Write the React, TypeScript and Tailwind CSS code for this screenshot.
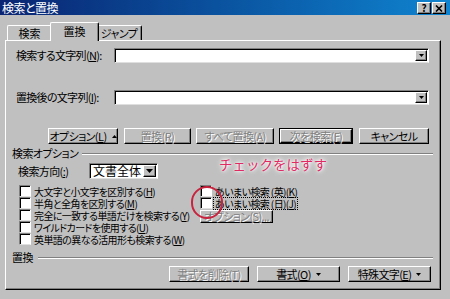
import type { ReactNode } from "react";

const raised =
  "bg-[#c0c0c0] border border-t-white border-l-white border-r-black border-b-black shadow-[inset_-1px_-1px_0_#808080]";
const sunken =
  "border border-t-[#808080] border-l-[#808080] border-r-white border-b-[#dfdfdf] shadow-[inset_1px_1px_0_#000]";
const disabledText = "text-[#808080] [text-shadow:1px_1px_0_#fff]";

function Down({ w = 5, h = 3 }: { w?: number; h?: number }) {
  return (
    <svg width={w} height={h} viewBox={`0 0 ${w} ${h}`} className="shrink-0">
      <path d={`M0 0H${w}L${w / 2} ${h}Z`} fill="currentColor" />
    </svg>
  );
}

function Up() {
  return (
    <svg width="5" height="3" viewBox="0 0 5 3" className="shrink-0">
      <path d="M0 3H5L2.5 0Z" fill="currentColor" />
    </svg>
  );
}

function Btn({
  className,
  children,
  disabled,
  isDefault,
}: {
  className: string;
  children: ReactNode;
  disabled?: boolean;
  isDefault?: boolean;
}) {
  const inner = (
    <div
      className={`h-full w-full flex items-center justify-center gap-[5px] whitespace-nowrap text-[11px] leading-none tracking-[-0.6px] ${raised} ${
        disabled ? disabledText : "text-black"
      }`}
    >
      {children}
    </div>
  );
  if (isDefault) {
    return <div className={`border border-black ${className}`}>{inner}</div>;
  }
  return <div className={className}>{inner}</div>;
}

function Combo({ className }: { className: string }) {
  return (
    <div className={`h-[15px] bg-white p-[1px] flex justify-end ${sunken} ${className}`}>
      <div className={`w-[12px] h-full flex items-center justify-center text-black ${raised}`}>
        <Down />
      </div>
    </div>
  );
}

function Box() {
  return <span className={`w-[12px] h-[12px] bg-white shrink-0 ${sunken}`} />;
}

function Check({ children, focus }: { children: ReactNode; focus?: boolean }) {
  return (
    <div className="flex items-center h-[12px]">
      <Box />
      <span
        className={`ml-[2px] px-[1px] text-[10px] leading-[11px] tracking-[-0.6px] whitespace-nowrap ${
          focus ? "outline outline-1 outline-dotted outline-black" : ""
        }`}
      >
        {children}
      </span>
    </div>
  );
}

function Sep({ label, lineClass }: { label: string; lineClass: string }) {
  return (
    <div className="flex items-center h-[13px]">
      <span className="text-[11px] leading-none tracking-[-0.6px] whitespace-nowrap">{label}</span>
      <div className={`flex-1 h-[2px] border-t border-t-[#808080] border-b border-b-white ${lineClass}`} />
    </div>
  );
}

export default function App() {
  return (
    <div className="relative w-[450px] h-[299px] overflow-hidden bg-[#c0c0c0] text-black [font-family:'Noto_Sans_CJK_JP','Noto_Sans',sans-serif] [font-feature-settings:'palt']">
      {/* title bar */}
      <div className="h-[15px] flex items-center justify-between pl-[2px] pr-[4px] bg-gradient-to-r from-[#0a2472] to-[#1084d0]">
        <span className="text-white text-[12px] leading-none tracking-[-0.5px]">検索と置換</span>
        <div className="flex items-center gap-[1px] pt-[1px]">
          <div className={`w-[14px] h-[12px] flex items-center justify-center text-[10px] font-bold leading-none ${raised}`}>
            ?
          </div>
          <div className={`w-[14px] h-[12px] flex items-center justify-center ${raised}`}>
            <svg width="8" height="7" viewBox="0 0 8 7">
              <path d="M1 0.5L7 6.5M7 0.5L1 6.5" stroke="#000" strokeWidth="1.6" />
            </svg>
          </div>
        </div>
      </div>

      {/* tabs */}
      <div className="h-[25px] flex items-end pl-[7px]">
        <div className="w-[45px] h-[15px] flex items-center justify-center text-[11px] leading-none border-t border-l border-t-white border-l-white border-r border-r-black shadow-[inset_-1px_0_0_#808080] rounded-tl-[2px]">
          検索
        </div>
        <div className="relative z-10 -mx-[2px] -mb-[1px] w-[49px] h-[19px] bg-[#c0c0c0] flex items-start justify-center pt-[3px] text-[11px] leading-none border-t border-l border-t-white border-l-white border-r border-r-black shadow-[inset_-1px_0_0_#808080] rounded-t-[2px]">
          置換
        </div>
        <div className="w-[45px] h-[15px] flex items-center justify-center text-[11px] leading-none tracking-[-0.6px] border-t border-t-white border-r border-r-black shadow-[inset_-1px_0_0_#808080] rounded-tr-[2px]">
          ジャンプ
        </div>
      </div>

      {/* panel */}
      <div className="ml-[5px] w-[436px] h-[250px] border border-t-white border-l-white border-r-black border-b-black shadow-[inset_-1px_-1px_0_#808080] pl-[6px] pr-[7px] pt-[7px]">
        <div className="flex items-center h-[15px]">
          <span className="w-[102px] pl-[4px] text-[11px] leading-none tracking-[-0.7px] whitespace-nowrap">
            検索する文字列(<span className="underline">N</span>):
          </span>
          <Combo className="w-[315px]" />
        </div>

        <div className="flex items-center h-[15px] mt-[27px]">
          <span className="w-[102px] pl-[4px] text-[11px] leading-none tracking-[-0.7px] whitespace-nowrap">
            置換後の文字列(<span className="underline">I</span>):
          </span>
          <Combo className="w-[315px]" />
        </div>

        <div className="flex h-[16px] mt-[23px] ml-[36px] gap-[5px]">
          <Btn className="w-[70px] mr-[1px]">
            <span>
              オプション(<span className="underline">L</span>)
            </span>
            <Up />
          </Btn>
          <Btn className="w-[67px]" disabled>
            置換(R)
          </Btn>
          <Btn className="w-[78px]" disabled>
            すべて置換(A)
          </Btn>
          <Btn className="w-[74px]" disabled isDefault>
            次を検索(F)
          </Btn>
          <Btn className="w-[70px] ml-[1px]">キャンセル</Btn>
        </div>

        <div className="mt-[3px]">
          <Sep label="検索オプション" lineClass="ml-[4px]" />
        </div>

        <div className="flex items-center h-[16px] mt-[3px] ml-[6px]">
          <span className="w-[71px] text-[11px] leading-none tracking-[-0.6px] whitespace-nowrap">
            検索方向(<span className="underline">:</span>)
          </span>
          <div className={`w-[69px] h-[16px] bg-white p-[1px] flex items-center ${sunken}`}>
            <span className="flex-1 pl-[2px] text-[12px] leading-none">文書全体</span>
            <div className={`w-[13px] h-full flex items-center justify-center ${raised}`}>
              <Down w={7} h={4} />
            </div>
          </div>
        </div>

        <div className="flex mt-[6px] ml-[7px]">
          <div className="w-[181px] flex flex-col">
            <Check>
              大文字と小文字を区別する(<span className="underline">H</span>)
            </Check>
            <Check>
              半角と全角を区別する(<span className="underline">M</span>)
            </Check>
            <Check>
              完全に一致する単語だけを検索する(<span className="underline">Y</span>)
            </Check>
            <Check>
              ワイルドカードを使用する(<span className="underline">U</span>)
            </Check>
            <Check>
              英単語の異なる活用形も検索する(<span className="underline">W</span>)
            </Check>
          </div>
          <div className="flex flex-col">
            <Check>
              あいまい検索 (英)(<span className="underline">K</span>)
            </Check>
            <Check focus>
              あいまい検索 (日)(<span className="underline">J</span>)
            </Check>
            <Btn className="w-[73px] h-[13px] mt-[1px]" disabled>
              オプション(S)...
            </Btn>
          </div>
        </div>

        <div className="mt-[6px]">
          <Sep label="置換" lineClass="ml-[5px]" />
        </div>

        <div className="flex h-[16px] mt-[2px] ml-[157px] gap-[8px]">
          <Btn className="w-[80px]" disabled>
            書式を削除(T)
          </Btn>
          <Btn className="w-[83px]">
            <span>
              書式(<span className="underline">O</span>)
            </span>
            <Down />
          </Btn>
          <Btn className="w-[83px]">
            <span>
              特殊文字(<span className="underline">E</span>)
            </span>
            <Down />
          </Btn>
        </div>
      </div>

      {/* annotation overlay */}
      <div className="absolute left-[191px] top-[186px] w-[32px] h-[33px] rounded-full border-2 border-[#c8243f]" />
      <div className="absolute left-[219px] top-[156px] text-[13.5px] leading-[16px] text-[#e02a64] whitespace-nowrap [font-feature-settings:normal] [text-shadow:0_0_2px_#fff,0_0_4px_#fff,0_0_6px_#fff]">
        チェックをはずす
      </div>
    </div>
  );
}
